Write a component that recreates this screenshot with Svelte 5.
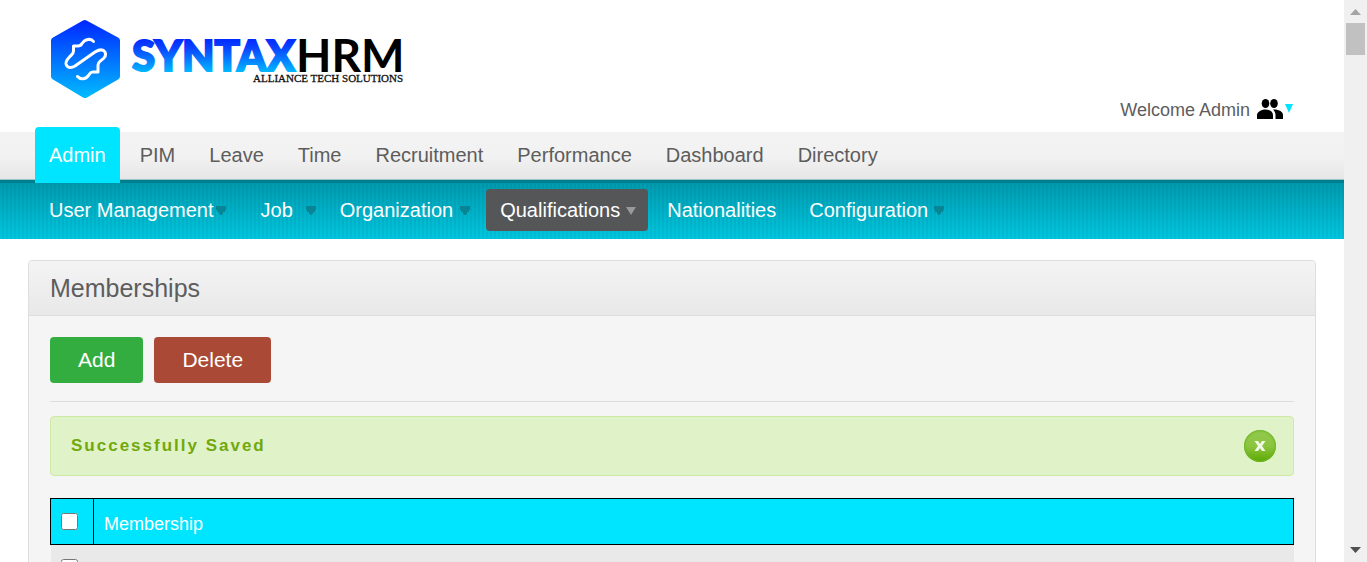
<script>
  const modules = ['Admin', 'PIM', 'Leave', 'Time', 'Recruitment', 'Performance', 'Dashboard', 'Directory'];
  const sections = [
    { name: 'User Management', menu: true },
    { name: 'Job', menu: true },
    { name: 'Organization', menu: true },
    { name: 'Qualifications', menu: true },
    { name: 'Nationalities', menu: false },
    { name: 'Configuration', menu: true }
  ];
  let activeModule = $state('Admin');
  let activeSection = $state('Qualifications');
  let showMessage = $state(true);
  let selectAll = $state(false);
</script>

<div class="shell">
  <div class="page">
    <header>
      <svg class="logo" width="358" height="82" viewBox="0 0 358 82" role="img" aria-label="SyntaxHRM Alliance Tech Solutions">
        <defs>
          <linearGradient id="hex" x1="0" y1="0" x2="0" y2="1">
            <stop offset="0" stop-color="#0026ff" />
            <stop offset="1" stop-color="#00bcff" />
          </linearGradient>
          <linearGradient id="word" gradientUnits="userSpaceOnUse" x1="0" y1="20" x2="0" y2="54">
            <stop offset="0" stop-color="#0026ff" />
            <stop offset="0.3" stop-color="#0a45ff" />
            <stop offset="1" stop-color="#00b8ff" />
          </linearGradient>
        </defs>
        <path d="M36.500 2.500 68 19.500q2 1 2 3v36q0 2-2 3L37 79.500q-2 1-4 0L3 61.500q-2-1-2-3v-36q0-2 2-3L33 2.500q2-1 3.500 0z" fill="url(#hex)" />
        <path d="M43.500 23.500C41 20 35 21 32 25.500c-1 2-2 2.500-4 2.500h-4.500v5c0 3-2 3.500-4 6-2 2-4 4-3.500 7 1 4 5 4.500 9 2L45 34c5-3 8-3 10 0 2 4-1 6.500-4 8.500-2 1.500-3 2-3 4.500v7h-5c-3 0-3 1.500-4.500 3.500-3 4-8 4.500-11 1" fill="none" stroke="#fff" stroke-width="3" stroke-linecap="round" stroke-linejoin="round" />
        <text x="82" y="53" font-family="Lato, sans-serif" font-weight="900" font-size="42" fill="url(#word)" stroke="url(#word)" stroke-width="2">SYNTAX</text>
        <text x="246" y="54" font-family="Lato, sans-serif" font-weight="700" font-size="46" fill="#000">HRM</text>
        <text x="203" y="64" font-family="'Liberation Serif', serif" font-size="11" fill="#111" stroke="#111" stroke-width="0.300">ALLIANCE TECH SOLUTIONS</text>
      </svg>
      <button class="welcome">
        Welcome Admin
        <svg width="36" height="22" viewBox="0 0 36 22" aria-hidden="true">
          <ellipse cx="8.500" cy="4.500" rx="3.800" ry="4.500" /><ellipse cx="17" cy="4.500" rx="3.800" ry="4.500" />
          <path d="M0 20v-4c0-3 4-5.500 8.500-5.500S16 13 16 16v4z" />
          <path d="M16 10.500c5.500-.5 10 2 10 5.500v4h-7.500v-4c0-2-1-4-2.500-5.500z" />
          <path d="M28 5h8l-4 9z" fill="#00e5ff" />
        </svg>
      </button>
    </header>

    <nav class="modules" aria-label="Modules">
      {#each modules as name}
        <a href="#{name}" class:active={name === activeModule} onclick={() => (activeModule = name)}>{name}</a>
      {/each}
    </nav>
    <nav class="sections" aria-label="Sections">
      {#each sections as s}
        <a href="#{s.name}" class:menu={s.menu} class:active={s.name === activeSection} onclick={() => (activeSection = s.name)}>{s.name}</a>
      {/each}
    </nav>

    <main>
      <h1>Memberships</h1>
      <div class="body">
        <div class="actions">
          <button class="add">Add</button>
          <button class="delete">Delete</button>
        </div>
        {#if showMessage}
          <div class="message" role="status">
            Successfully Saved
            <button aria-label="Close" onclick={() => (showMessage = false)}>
              <svg width="12" height="12" viewBox="0 0 12 12" aria-hidden="true">
                <path d="M.5 1h3.500l2 3 2-3h3.500L8 6l3.500 5H8L6 8l-2 3H.5L4 6z" fill="#f3f9ea" />
              </svg>
            </button>
          </div>
        {/if}
        <table>
          <thead>
            <tr>
              <th class="check"><input type="checkbox" aria-label="Select all" bind:checked={selectAll} /></th>
              <th>Membership</th>
            </tr>
          </thead>
          <tbody>
            <tr>
              <td class="check"><input type="checkbox" aria-label="Select membership" checked={selectAll} /></td>
              <td></td>
            </tr>
          </tbody>
        </table>
      </div>
    </main>
  </div>

  <div class="scrollbar" aria-hidden="true">
    <svg width="11" height="6" viewBox="0 0 11 6"><path d="M0 6 5.500 0 11 6z" fill="#a3a3a3" /></svg>
    <div class="thumb"></div>
    <svg width="11" height="6" viewBox="0 0 11 6"><path d="M0 0h11L5.500 6z" fill="#505050" /></svg>
  </div>
</div>

<style>
  :global(body) {
    margin: 0;
    background: #fff;
  }
  .shell {
    display: flex;
    height: 100vh;
    overflow: hidden;
    font-family: 'Liberation Sans', Arial, sans-serif;
    color: #5d5d5d;
  }
  .page {
    flex: 1;
    min-width: 0;
  }
  a {
    text-decoration: none;
  }
  button {
    border: 0;
    font-family: inherit;
    cursor: pointer;
  }
  header {
    display: flex;
    justify-content: space-between;
    align-items: flex-end;
    height: 132px;
    padding: 0 51px 0 50px;
    box-sizing: border-box;
  }
  .logo {
    align-self: flex-start;
    margin-top: 18px;
  }
  .welcome {
    display: flex;
    align-items: center;
    gap: 7px;
    padding: 0;
    margin-bottom: 11px;
    background: none;
    font-size: 18px;
    line-height: 22px;
    color: #5d5d5d;
  }
  nav {
    display: flex;
    padding: 0 35px;
    font-size: 20px;
  }
  nav a {
    padding: 0 14px;
  }
  .modules {
    gap: 6px;
    height: 51px;
    align-items: flex-end;
    background: linear-gradient(#f3f3f3 0, #f2f2f2 24px, #e6e6e6 47px, #9fc4c8 47px, #9fc4c8 48px, #007f8e 48px);
  }
  .modules a {
    line-height: 56px;
    color: #5d5d5d;
  }
  .modules a.active {
    color: #fff;
    background: #00e5ff;
    border-radius: 4px 4px 0 0;
  }
  .sections {
    gap: 5px;
    height: 56px;
    align-items: center;
    padding-bottom: 2px;
    box-sizing: border-box;
    background:
      repeating-linear-gradient(90deg, transparent 0 2px, rgba(0, 60, 80, 0.07) 2px 4px),
      linear-gradient(#009aae, #00c8e0);
  }
  .sections a {
    line-height: 42px;
    color: #fff;
    border-radius: 4px;
    background: 92% 50% no-repeat;
  }
  .sections a.menu {
    padding-right: 28px;
    background-image: url("data:image/svg+xml,%3Csvg xmlns='http://www.w3.org/2000/svg' width='10' height='9'%3E%3Cpath d='M0 0h10v4H9v2H7v2H6v1H4V8H3V6H1V4H0z' fill='%23078594'/%3E%3C/svg%3E");
  }
  .sections a.active {
    background-color: #545658;
    background-image: url("data:image/svg+xml,%3Csvg xmlns='http://www.w3.org/2000/svg' width='10' height='9'%3E%3Cpath d='M0 1h10L5 9z' fill='%23999'/%3E%3C/svg%3E");
  }
  main {
    margin: 21px 28px;
    border: 1px solid #dedede;
    border-radius: 4px;
    background: #f5f5f5;
  }
  h1 {
    margin: 0;
    padding: 0 21px;
    font-size: 25px;
    font-weight: 400;
    line-height: 54px;
    border-bottom: 1px solid #dedede;
    border-radius: 3px 3px 0 0;
    background: linear-gradient(#f4f4f4, #e8e8e8);
  }
  .body {
    padding: 21px;
  }
  .actions {
    display: flex;
    gap: 11px;
    padding-bottom: 18px;
    border-bottom: 1px solid #dedede;
  }
  .actions button {
    padding: 0 28px;
    border-radius: 4px;
    font-size: 21px;
    line-height: 46px;
    color: #fff;
  }
  .add {
    background: #34ad40;
  }
  .delete {
    background: #aa4a36;
  }
  .message {
    display: flex;
    justify-content: space-between;
    align-items: center;
    margin: 14px 0 22px;
    padding: 0 17px 0 20px;
    border: 1px solid #cdeaa4;
    border-radius: 4px;
    background: #dff2c8;
    font-size: 17px;
    font-weight: 700;
    line-height: 58px;
    letter-spacing: 2px;
    color: #72a80c;
  }
  .message button {
    display: grid;
    place-items: center;
    width: 32px;
    height: 32px;
    padding: 0;
    border-radius: 50%;
    background: linear-gradient(#92c94e, #8cc63f 50%, #5aa800);
    box-shadow: inset 0 0 2px 1px #6fb52a;
  }
  table {
    width: 100%;
    border-collapse: collapse;
    font-size: 18px;
    text-align: left;
  }
  th {
    height: 46px;
    padding: 6px 10px 0;
    box-sizing: border-box;
    border: 1px solid #000;
    background: #00e5ff;
    color: #fff;
    font-weight: 400;
  }
  td {
    height: 44px;
    padding: 0 10px;
    background: #e9e9e9;
  }
  .check {
    width: 23px;
    padding: 0 10px;
  }
  th.check {
    width: 43px;
  }
  .check input {
    display: block;
    width: 17px;
    height: 17px;
    margin: 0;
  }
  .scrollbar {
    display: flex;
    flex-direction: column;
    align-items: center;
    width: 23px;
    padding: 9px 0;
    box-sizing: border-box;
    background: #f0f0f0;
  }
  .thumb {
    width: 19px;
    height: 32px;
    margin: 8px 0 auto;
    background: #c1c1c1;
  }
</style>
